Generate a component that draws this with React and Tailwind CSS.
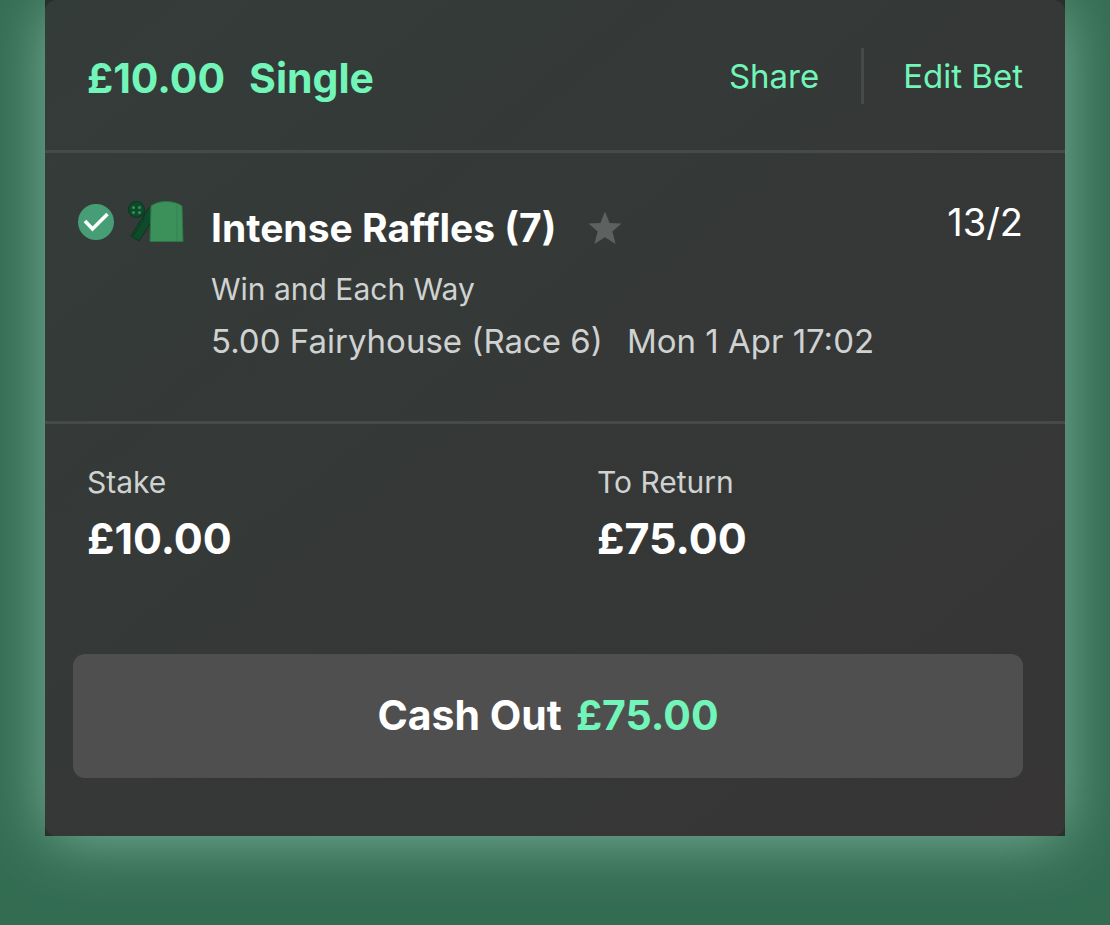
const selections = [
  {
    name: 'Intense Raffles (7)',
    market: 'Win and Each Way',
    event: '5.00 Fairyhouse (Race 6)',
    time: 'Mon 1 Apr 17:02',
    odds: '13/2'
  }
];

function TickBadge() {
  return (
    <svg viewBox="0 0 36 36" className="h-9 w-9" aria-hidden="true">
      <circle cx="18" cy="18" r="18" fill="#479d75" />
      <path d="M7 17 L14.5 25 L29.5 10" fill="none" stroke="#fff" strokeWidth="3.6" />
    </svg>
  );
}

// Jockey silks: cap, sleeve and body
function Silks() {
  return (
    <svg viewBox="0 0 56 42" className="h-[42px] w-14" aria-hidden="true">
      <path d="M19 9 L24 4 L24 20 L11 40 L3 35 Z" fill="#0f4a2b" stroke="#0a351f" strokeWidth="1" />
      <path d="M17 12 L15 20 L5 35" fill="none" stroke="#0a3a22" strokeWidth="1" />
      <circle cx="8.5" cy="8.5" r="8" fill="#0e4b2b" stroke="#0a351f" strokeWidth="1" />
      <circle cx="5.5" cy="6.5" r="1.5" fill="#3a8f58" />
      <circle cx="11.5" cy="6.5" r="1.5" fill="#3a8f58" />
      <circle cx="5.5" cy="11.5" r="1.5" fill="#3a8f58" />
      <circle cx="11.5" cy="11.5" r="1.5" fill="#3a8f58" />
      <path d="M23 5 Q29 0.5 38 0.5 Q48 0.5 54 5 L55 40.5 L22 40.5 Z" fill="#3c9059" stroke="#2c7546" strokeWidth="1" />
      <path d="M49 4 V40" stroke="#35824f" strokeWidth="1" />
    </svg>
  );
}

function Star() {
  return (
    <svg viewBox="0 0 34 34" className="h-[34px] w-[34px]" aria-hidden="true">
      <path d="M17 0.5 L21.6 12 L33.5 12.6 L24.4 20.4 L27.6 33 L17 26.2 L6.4 33 L9.6 20.4 L0.5 12.6 L12.4 12 Z" fill="#5d6160" />
    </svg>
  );
}

function Selection({ item }) {
  return (
    <section className="flex items-start border-b-3 border-[#464a49] pt-12 pr-[42px] pb-[54px] pl-[33px]">
      <div className="flex items-center gap-3.5">
        <TickBadge />
        <Silks />
      </div>
      <div className="ml-[27px] flex-1">
        <div className="flex items-center gap-8">
          <h2 className="text-[39px] leading-[54px] font-bold text-white">{item.name}</h2>
          <button type="button" aria-label="Add to favourites">
            <Star />
          </button>
        </div>
        <p className="mt-2 text-[30px] leading-[52px] text-[#cfd2d1]">{item.market}</p>
        <p className="flex gap-6 text-[33px] leading-[52px] text-[#cfd2d1]">
          <span>{item.event}</span>
          <span>{item.time}</span>
        </p>
      </div>
      <span className="text-[38px] leading-[42px] text-white">{item.odds}</span>
    </section>
  );
}

function Amount({ label, value }) {
  return (
    <div className="w-1/2 pl-[42px]">
      <dt className="text-[30px] leading-[44px] text-[#d0d2d1]">{label}</dt>
      <dd className="text-[43px] leading-[68px] font-bold text-white">{value}</dd>
    </div>
  );
}

export default function App() {
  return (
    <main className="min-h-screen overflow-hidden bg-[#336c51] px-[45px] pb-[89px] font-['Inter',sans-serif]">
      <div className="bg-[#292f2d] shadow-[0_3px_60px_-2px_#7eb4a1]">
        <article className="rounded-xl bg-linear-to-br from-[#343c39] via-[#353837] to-[#373536]">
          <header className="flex items-center justify-between border-b-3 border-[#464a49] pt-12 pr-[42px] pb-[46px] pl-[42px]">
            <h1 className="flex gap-6 pt-1 text-[41px] leading-[52px] font-bold text-[#72f5b8]">
              <span>£10.00</span>
              <span>Single</span>
            </h1>
            <div className="flex items-center text-[33px] leading-[56px] text-[#72f5b8]">
              <button type="button" className="pr-[42px]">Share</button>
              <button type="button" className="border-l-3 border-[#464a49] pl-[39px]">Edit Bet</button>
            </div>
          </header>

          {selections.map((item) => (
            <Selection key={item.name} item={item} />
          ))}

          <dl className="flex pt-9">
            <Amount label="Stake" value="£10.00" />
            <Amount label="To Return" value="£75.00" />
          </dl>

          <div className="pt-[82px] pr-[42px] pb-[58px] pl-7">
            <button
              type="button"
              className="flex h-[124px] w-full items-center justify-center gap-3.5 rounded-xl bg-[#504f4f] text-[41px] font-bold text-white"
            >
              <span>Cash Out</span>
              <span className="text-[#72f5b8]">£75.00</span>
            </button>
          </div>
        </article>
      </div>
    </main>
  );
}
